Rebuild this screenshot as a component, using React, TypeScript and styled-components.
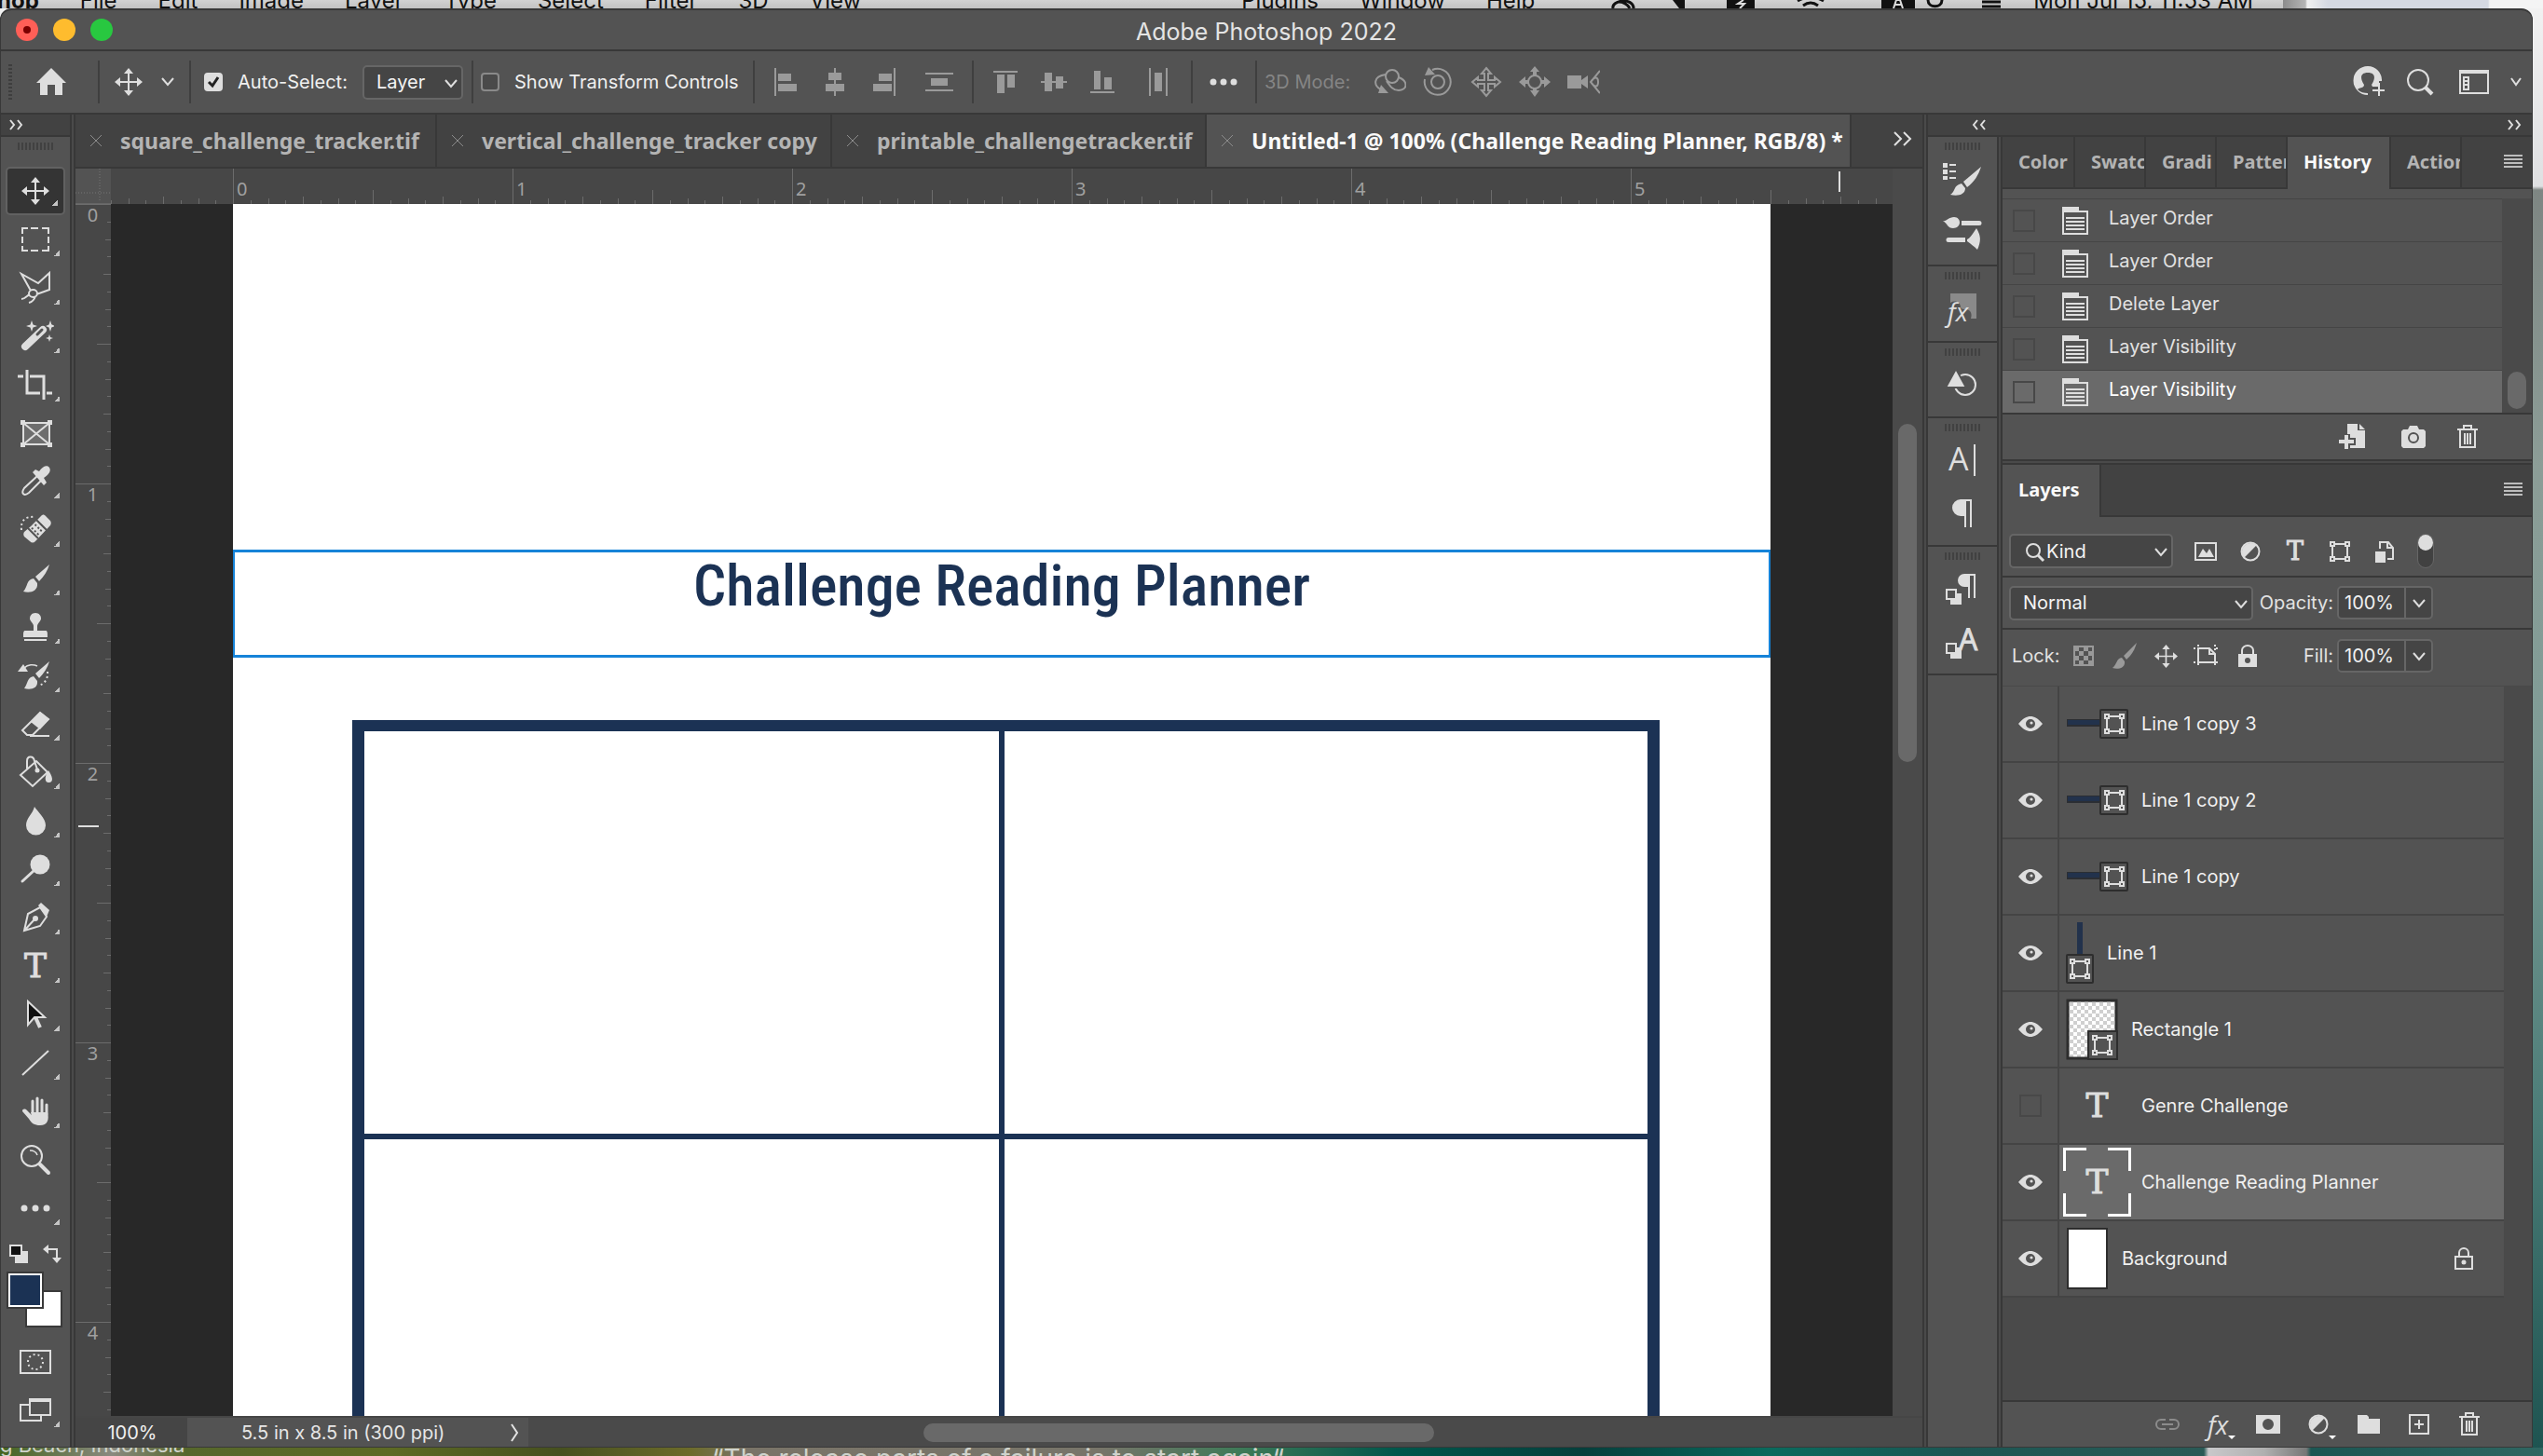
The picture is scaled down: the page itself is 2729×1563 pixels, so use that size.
import React from "react";
import styled, { createGlobalStyle, css } from "styled-components";

const c = {
  panel: "#535353",
  dark: "#424242",
  mid: "#4a4a4a",
  ruler: "#474747",
  line: "#383838",
  icon: "#dedede",
  dim: "#9a9a9a",
  text: "#f0f0f0",
  navy: "#1b3254",
};
const ui = `Inter, "Liberation Sans", sans-serif`;
const tabFont = `"Noto Sans", "Open Sans", sans-serif`;

const Global = createGlobalStyle`
  *, *::before, *::after { box-sizing: border-box; }
  body { margin: 0; font-family: ${ui}; font-size: 20px; color: ${c.text}; }
  button, input, select { font: inherit; color: inherit; margin: 0; }
  button { background: none; border: 0; padding: 0; display: flex; align-items: center; justify-content: center; flex: none; }
  svg { display: block; flex: none; }
`;

/* ---------- Desktop ---------- */
const Desktop = styled.div`
  height: 100vh;
  display: flex;
  flex-direction: column;
  overflow: hidden;
  background: linear-gradient(180deg, #f2f2f2 0, #dfe0e2 200px, #7e8683 204px, #8c9d97 500px, #7f9c96 800px, #4c7d78 1200px, #1d5350 100%);
`;
const MenuBar = styled.div`
  height: 9px;
  flex: none;
  display: flex;
  background: linear-gradient(180deg, #d2d2d2, #c2c2c2);
  color: #111;
  font-size: 24px;
  line-height: 28px;
  overflow: hidden;
  white-space: nowrap;
`;
const MenuText = styled.nav`
  display: flex;
  gap: 44px;
  margin: -13px 408px 0 -3px;
`;
const MenuRight = styled.div`
  display: flex;
  gap: 44px;
  margin-top: -13px;
`;
const MenuIcons = styled.svg`
  margin: 0 33px 0 82px;
`;
const MenuEnd = styled.div`
  margin-left: 32px;
  flex: 1;
  height: 9px;
  background: linear-gradient(90deg, #8c8c8c 0, #b5b5b5 24px, #f0f0f0 26px, #d5d9e3 48px, #d5d9e3 220px, #f4f4f4 222px);
`;
const DesktopFoot = styled.div`
  height: 9px;
  flex: none;
  overflow: hidden;
  white-space: nowrap;
  display: flex;
  gap: 566px;
  color: #cfd3cc;
  font-size: 22px;
  line-height: 26px;
  background: linear-gradient(90deg, #44651f 0, #8a8a80 120px, #56672c 200px, #5d6a24 420px, #46501f 600px, #6c6b2a 740px, #7a7468 800px, #78756a 1180px, #3f7a58 1330px, #00564b 1500px, #063f3c 1700px, #0a6a5d 1900px, #1c5653 2100px, #2a5a56 2365px, #c8c8ca 2370px, #b0b0b0 2430px, #777 2475px, #1c5653 2480px, #2f6661 100%);
`;
const FootText = styled.span<{ $big?: boolean }>`
  margin-top: ${(p) => (p.$big ? "-1px" : "-16px")};
  font-size: ${(p) => (p.$big ? 28 : 22)}px;
`;

/* ---------- Window ---------- */
const Window = styled.div`
  flex: 1;
  min-height: 0;
  margin-right: 11px;
  display: flex;
  flex-direction: column;
  background: ${c.line};
  border: solid ${c.line};
  border-width: 2px 1px 1px;
  border-radius: 12px 12px 0 0;
  overflow: hidden;
`;
const TitleBar = styled.header`
  height: 42px;
  flex: none;
  display: grid;
  grid-template-columns: 1fr auto 1fr;
  align-items: center;
  padding: 0 16px;
  background: ${c.panel};
  color: #e4e4e4;
`;
const Title = styled.h1`
  margin: 4px 0 0;
  font-size: 25px;
  font-weight: 400;
  line-height: 30px;
`;
const Lights = styled.div`
  display: flex;
  gap: 16px;
`;
const Light = styled.button<{ $c: string }>`
  width: 24px;
  height: 24px;
  border-radius: 50%;
  background: ${(p) => p.$c};
`;
const OptionsBar = styled.div`
  height: 66px;
  flex: none;
  margin-top: 2px;
  padding-right: 4px;
  display: flex;
  align-items: center;
  background: ${c.panel};
`;
const Section = styled.div<{ $w?: number }>`
  display: flex;
  align-items: center;
  height: 46px;
  flex: none;
  width: ${(p) => (p.$w ? p.$w + "px" : "auto")};
  border-right: 2px solid #3f3f3f;
`;
const Cell = styled.button<{ $w?: number; $h?: number; $gap?: number }>`
  position: relative;
  width: ${(p) => p.$w ?? 52}px;
  height: ${(p) => p.$h ?? 44}px;
  margin-left: ${(p) => p.$gap ?? 0}px;
`;
const DotGrip = styled.span`
  width: 4px;
  height: 38px;
  margin: 0 16px 0 8px;
  background: repeating-linear-gradient(180deg, #3e3e3e 0 2px, transparent 2px 4px);
`;
const Check = styled.input`
  appearance: none;
  width: 20px;
  height: 20px;
  flex: none;
  border: 2px solid #8a8a8a;
  border-radius: 4px;
  background: #4a4a4a;
  &:checked {
    border-color: ${c.icon};
    background: ${c.icon};
  }
`;
const CheckLabel = styled.label<{ $left: number }>`
  display: flex;
  align-items: center;
  gap: 16px;
  white-space: nowrap;
  margin-left: ${(p) => p.$left}px;
`;
const CheckBox = styled.span`
  position: relative;
  display: flex;
`;
const Tick = styled.svg`
  position: absolute;
  left: 2px;
  top: 2px;
  pointer-events: none;
`;
const SelectBox = styled.span<{ $w: number; $pad?: number; $right?: number }>`
  position: relative;
  width: ${(p) => p.$w}px;
  flex: none;
  margin-right: ${(p) => p.$right ?? 0}px;
  select {
    appearance: none;
    width: 100%;
    height: 37px;
    padding: 0 0 0 ${(p) => p.$pad ?? 13}px;
    background: #454545;
    border: 2px solid #666;
    border-radius: 5px;
    color: #f4f4f4;
  }
`;
const SelectArrow = styled.svg`
  position: absolute;
  right: 6px;
  top: 14px;
  pointer-events: none;
`;
const SelectLens = styled.svg`
  position: absolute;
  left: 17px;
  top: 9px;
  pointer-events: none;
`;
const DimLabel = styled.span`
  margin: 0 16px 0 8px;
  color: #858585;
`;
const Spacer = styled.div`
  flex: 1;
`;

const Body = styled.div`
  flex: 1;
  min-height: 0;
  margin-top: 2px;
  display: flex;
`;
const Strip = styled.div`
  height: 22px;
  flex: none;
  display: flex;
  align-items: center;
  background: ${c.dark};
  margin-bottom: 2px;
`;
const Split = styled.div`
  width: 6px;
  flex: none;
  background: ${c.mid};
  border: solid ${c.line};
  border-width: 0 2px;
`;
const Grip = styled.span`
  width: 38px;
  height: 8px;
  flex: none;
  background: repeating-linear-gradient(90deg, #414141 0 2px, transparent 2px 4px);
`;

/* ---------- Tools ---------- */
const ToolCol = styled.aside`
  width: 74px;
  flex: none;
  display: flex;
  flex-direction: column;
`;
const ToolList = styled.div`
  flex: 1;
  background: ${c.panel};
  display: flex;
  flex-direction: column;
  align-items: center;
  padding-top: 6px;
`;
const Tools = styled.div`
  margin-top: 18px;
`;
const Tool = styled.button<{ $on?: boolean }>`
  position: relative;
  width: 64px;
  height: 52px;
  border-radius: 5px;
  ${(p) => p.$on && css`background: #343434; border: 2px solid #616161;`}
`;
const Corner = styled.i`
  position: absolute;
  right: 6px;
  bottom: 8px;
  width: 6px;
  height: 6px;
  background: linear-gradient(135deg, transparent 50%, #c4c4c4 50%);
`;
const DropMark = styled.i`
  position: absolute;
  right: 8px;
  bottom: 6px;
  border: solid transparent;
  border-width: 4px 4px 0;
  border-top-color: #fff;
`;
const MiniRow = styled.div`
  display: flex;
  width: 58px;
  justify-content: space-between;
  margin-top: 13px;
`;
const Swatches = styled.div`
  position: relative;
  width: 60px;
  height: 60px;
  margin: 9px 2px 11px 0;
`;
const Swatch = styled.button<{ $c: string; $back?: boolean }>`
  position: absolute;
  width: 40px;
  height: 40px;
  background: ${(p) => p.$c};
  border: 2px solid #3a3a3a;
  ${(p) => (p.$back ? "right: 0; bottom: 0;" : "left: 0; top: 0; box-shadow: inset 0 0 0 2px #fff;")}
`;

/* ---------- Document ---------- */
const Doc = styled.main`
  flex: 1;
  min-width: 0;
  display: flex;
  flex-direction: column;
`;
const DocTabs = styled.div`
  height: 56px;
  flex: none;
  display: flex;
  background: ${c.dark};
`;
const DocTab = styled.div<{ $on?: boolean; $w: number }>`
  width: ${(p) => p.$w}px;
  flex: none;
  display: flex;
  align-items: center;
  gap: 20px;
  padding-left: 16px;
  border-right: 2px solid ${c.line};
  background: ${(p) => (p.$on ? c.panel : c.dark)};
  overflow: hidden;
`;
const DocName = styled.button<{ $on?: boolean }>`
  font-family: ${tabFont};
  font-weight: 700;
  font-size: 23px;
  line-height: 28px;
  white-space: nowrap;
  color: ${(p) => (p.$on ? "#fafafa" : "#b4b4b4")};
`;
const Stage = styled.div`
  flex: 1;
  min-height: 0;
  margin-top: 2px;
  display: grid;
  grid-template-columns: 38px minmax(0, 1fr) 32px;
  grid-template-rows: 38px minmax(0, 1fr);
`;
const RulerCorner = styled.div`
  background: ${c.panel};
  border: solid #666;
  border-width: 0 0 1px;
`;
const RulerX = styled.div`
  position: relative;
  overflow: hidden;
  background: ${c.ruler};
  display: flex;
  justify-content: center;
`;
const RulerY = styled.div`
  position: relative;
  overflow: hidden;
  background: ${c.ruler};
`;
const Ticks = styled.svg`
  position: absolute;
  inset: 0;
  width: 100%;
  height: 100%;
`;
const NumsX = styled.div`
  position: relative;
  width: 1650px;
  flex: none;
  display: flex;
  overflow: hidden;
`;
const Num = styled.span<{ $y?: boolean }>`
  flex: none;
  font-family: ${tabFont};
  font-size: 20px;
  color: #a0a0a0;
  ${(p) =>
    p.$y
      ? "display: block; height: 300px; line-height: 24px; text-align: center; padding-right: 1px;"
      : "width: 300px; line-height: 28px; padding: 8px 0 0 4px;"}
`;
const VBar = styled.div`
  background: ${c.mid};
  display: flex;
  justify-content: center;
`;
const VThumb = styled.div`
  width: 20px;
  height: 363px;
  margin-top: 236px;
  border-radius: 10px;
  background: #696969;
`;
const Pasteboard = styled.div`
  background: #282828;
  display: flex;
  justify-content: center;
  overflow: hidden;
`;
const Page = styled.div`
  width: 1650px;
  flex: none;
  background: #fff;
  padding-top: 371px;
`;
const TextFrame = styled.div`
  height: 116px;
  border: 3px solid #1683d8;
  border-width: 3px 2px;
  color: ${c.navy};
  font-family: "Roboto Condensed", "Liberation Sans Narrow", sans-serif;
  font-weight: 500;
  font-size: 62px;
  line-height: 72px;
  text-align: center;
  white-space: nowrap;
`;
const Planner = styled.div`
  width: 1403px;
  margin: 67px 0 0 128px;
  border: solid ${c.navy};
  border-width: 12px 13px;
  display: grid;
  grid-template-columns: 681fr 690fr;
  grid-template-rows: 432px 432px;
  gap: 6px;
  background: ${c.navy};
`;
const PlannerCell = styled.div`
  background: #fff;
`;
const StatusBar = styled.footer`
  height: 33px;
  flex: none;
  display: flex;
  background: ${c.mid};
  border-top: 2px solid #464646;
`;
const ZoomBox = styled.input`
  width: 120px;
  border: 0;
  background: #454545;
  text-align: center;
  padding: 0 0 0 2px;
`;
const DocInfo = styled.button`
  width: 366px;
  background: ${c.panel};
  padding: 0 10px 0 58px;
  justify-content: space-between;
  color: #e6e6e6;
`;
const HTrack = styled.div`
  flex: 1;
  display: grid;
  grid-template-columns: 424fr 547fr 524fr;
  align-items: center;
`;
const HThumb = styled.div`
  grid-column: 2;
  height: 20px;
  border-radius: 10px;
  background: #696969;
`;

/* ---------- Right dock ---------- */
const Dock = styled.section`
  width: 648px;
  flex: none;
  display: flex;
  flex-direction: column;
`;
const DockStrip = styled(Strip)`
  padding: 0 12px 0 48px;
  justify-content: space-between;
`;
const DockBody = styled.div`
  flex: 1;
  min-height: 0;
  display: flex;
`;
const IconCol = styled.div`
  width: 74px;
  flex: none;
  display: flex;
  flex-direction: column;
  gap: 2px;
`;
const IconGroup = styled.div<{ $grow?: boolean }>`
  background: ${c.panel};
  display: flex;
  flex-direction: column;
  align-items: center;
  padding: 6px 0 7px;
  ${(p) => p.$grow && "flex: 1;"}
`;
const Panels = styled.div`
  flex: 1;
  min-width: 0;
  display: flex;
  flex-direction: column;
`;
const Panel = styled.div<{ $grow?: boolean }>`
  display: flex;
  flex-direction: column;
  background: ${c.panel};
  min-height: 0;
  ${(p) => p.$grow && "flex: 1;"}
`;
const PanelGap = styled.div`
  height: 6px;
  flex: none;
  background: ${c.mid};
  border: solid ${c.line};
  border-width: 2px 0;
`;
const PanelTabs = styled.div`
  height: 56px;
  flex: none;
  display: flex;
  background: ${c.dark};
  box-shadow: inset 0 -2px ${c.line};
`;
const PanelTab = styled.button<{ $on?: boolean; $w: number }>`
  width: ${(p) => p.$w}px;
  justify-content: flex-start;
  padding: 0 0 4px 17px;
  overflow: hidden;
  border-right: 2px solid ${c.line};
  background: ${(p) => (p.$on ? c.panel : "transparent")};
  color: ${(p) => (p.$on ? "#fafafa" : "#b4b4b4")};
  font-family: ${tabFont};
  font-weight: 700;
  font-size: 20px;
`;
const PanelMenu = styled.button`
  margin-left: auto;
  padding: 0 10px 4px 0;
`;
const HistoryList = styled.div`
  margin-top: 10px;
  display: flex;
`;
const HistoryRows = styled.div`
  flex: 1;
`;
const HistoryRow = styled.label<{ $on?: boolean }>`
  height: 46px;
  display: flex;
  align-items: center;
  border-top: 1px solid #454545;
  background: ${(p) => (p.$on ? "#6a6a6a" : c.panel)};
  color: ${(p) => (p.$on ? "#fff" : "#e2e2e2")};
`;
const HistoryName = styled.span`
  padding-bottom: 6px;
`;
const HistoryIcon = styled.svg`
  margin: 0 22px 0 29px;
`;
const EmptyCheck = styled.input`
  appearance: none;
  width: 24px;
  height: 24px;
  flex: none;
  margin-left: 11px;
  border: 2px solid #484848;
`;
const SideTrack = styled.div<{ $w?: number }>`
  width: ${(p) => p.$w ?? 32}px;
  flex: none;
  background: ${c.mid};
  display: flex;
  align-items: flex-end;
  justify-content: center;
`;
const SideThumb = styled.div`
  width: 20px;
  height: 40px;
  margin-bottom: 4px;
  border-radius: 10px;
  background: #696969;
`;
const HistoryFoot = styled.div`
  height: 50px;
  display: flex;
  align-items: center;
  justify-content: flex-end;
  padding-right: 40px;
  border-top: 2px solid ${c.line};
`;
const LayerBar = styled.div<{ $h: number; $line?: boolean; $top?: number; $bottom?: number }>`
  height: ${(p) => p.$h}px;
  flex: none;
  display: flex;
  align-items: center;
  padding: ${(p) => p.$top ?? 0}px 0 ${(p) => p.$bottom ?? 0}px 7px;
  ${(p) => p.$line && `border-bottom: 2px solid ${c.line};`}
`;
const Toggle = styled.button`
  width: 18px;
  height: 37px;
  margin-left: 11px;
  border-radius: 9px;
  border: 1px solid #666;
  background: #414141;
  align-items: flex-start;
  &::before {
    content: "";
    width: 17px;
    height: 17px;
    border-radius: 50%;
    background: ${c.icon};
  }
`;
const FieldLabel = styled.label<{ $push?: boolean }>`
  color: #e2e2e2;
  margin-right: 4px;
  ${(p) => (p.$push ? "margin-left: auto;" : "margin-left: 3px;")}
`;
const Combo = styled.span`
  width: 103px;
  height: 36px;
  display: flex;
  flex: none;
  margin: 0 106px 0 0;
  border: 2px solid #666;
  border-radius: 5px;
  background: #454545;
  input {
    width: 72px;
    background: none;
    border: 0;
    border-right: 2px solid #666;
    padding: 0 0 0 6px;
  }
  button { flex: 1; padding-top: 2px; }
`;
const LayerArea = styled.div`
  flex: 1;
  min-height: 0;
  display: flex;
  background: ${c.mid};
  border-top: 1px solid #494949;
`;
const LayerList = styled.ul`
  list-style: none;
  margin: 0;
  padding: 0;
  flex: 1;
`;
const LayerRow = styled.li<{ $on?: boolean }>`
  height: 82px;
  display: grid;
  grid-template-columns: 61px 1fr;
  border-bottom: 2px solid #444;
  background: ${(p) => (p.$on ? "#6a6a6a" : c.panel)};
`;
const EyeCell = styled.button`
  background: ${c.panel};
  border-right: 2px solid #444;
`;
const EyeOff = styled.span`
  width: 24px;
  height: 24px;
  border: 2px solid #484848;
`;
const LayerBody = styled.div`
  display: flex;
  align-items: center;
  padding: 0 33px 0 7px;
`;
const LayerName = styled.span`
  flex: 1;
  margin-left: 14px;
`;
const Bracket = styled.span<{ $on?: boolean }>`
  width: 73px;
  height: 74px;
  margin: 0 -3px;
  display: flex;
  align-items: center;
  justify-content: center;
  --b: ${(p) => (p.$on ? "#fff" : "transparent")};
  background:
    linear-gradient(var(--b) 0 0) 0 0 / 25px 3px, linear-gradient(var(--b) 0 0) 0 0 / 3px 25px,
    linear-gradient(var(--b) 0 0) 100% 0 / 25px 3px, linear-gradient(var(--b) 0 0) 100% 0 / 3px 25px,
    linear-gradient(var(--b) 0 0) 0 100% / 25px 3px, linear-gradient(var(--b) 0 0) 0 100% / 3px 25px,
    linear-gradient(var(--b) 0 0) 100% 100% / 25px 3px, linear-gradient(var(--b) 0 0) 100% 100% / 3px 25px;
  background-repeat: no-repeat;
`;
const SlabT = styled.span<{ $s: number }>`
  font-family: "DejaVu Serif", serif;
  font-size: ${(p) => p.$s}px;
  line-height: 1;
  color: ${c.icon};
  -webkit-text-stroke: 1px ${c.icon};
`;
const LayersFoot = styled.div`
  height: 50px;
  flex: none;
  display: flex;
  align-items: center;
  justify-content: flex-end;
  padding-right: 40px;
  border-top: 2px solid ${c.line};
`;
const Fx = styled.span<{ $s: number }>`
  font-family: "Open Sans", sans-serif;
  font-style: italic;
  font-size: ${(p) => p.$s}px;
  line-height: 1;
  color: ${c.icon};
`;

/* ---------- Drawings ---------- */
type DrawProps = { w: number; h: number; children: React.ReactNode };
const Draw = ({ w, h, children }: DrawProps) => (
  <svg width={w} height={h} viewBox={`0 0 ${w} ${h}`} fill="none" stroke={c.icon} strokeWidth={2} aria-hidden="true">
    {children}
  </svg>
);
const F = { fill: c.icon, stroke: "none" };
const D = { fill: c.dim, stroke: "none" };

const Chevron = ({ w = 14 }: { w?: number }) => (
  <Draw w={w} h={12}><path d={`M1 2l${w / 2 - 1} 7 ${w / 2 - 1}-7`} /></Draw>
);
const Double = ({ left, s = 12 }: { left?: boolean; s?: number }) => (
  <Draw w={s + 4} h={s}>
    {left ? (
      <path d={`M${s / 2} 1l-4 ${s / 2 - 1} 4 ${s / 2 - 1}M${s + 2} 1l-4 ${s / 2 - 1} 4 ${s / 2 - 1}`} />
    ) : (
      <path d={`M2 1l${s / 3} ${s / 2 - 1}-${s / 3} ${s / 2 - 1}M${s / 2 + 4} 1l${s / 3} ${s / 2 - 1}-${s / 3} ${s / 2 - 1}`} />
    )}
  </Draw>
);
const Burger = () => (
  <Draw w={20} h={16}><path stroke="#bdbdbd" d="M0 2h20M0 6h20M0 10h20M0 14h20" /></Draw>
);
const Move = ({ s = 30 }: { s?: number }) => (
  <svg width={s} height={s} viewBox="0 0 30 30" fill="none" stroke={c.icon} strokeWidth={2}>
    <path d="M15 4v22M4 15h22" />
    <path {...F} d="M15 0l5 6H10zM15 30l5-6H10zM0 15l6-5v10zM30 15l-6-5v10z" />
  </svg>
);
const ShapeBox = ({ w = 22, h = 22 }: { w?: number; h?: number }) => (
  <svg width={w} height={h} viewBox="0 0 22 22" fill="none" stroke={c.icon} strokeWidth={2}>
    <path d="M5 3h12M5 19h12M3 5v12M19 5v12" />
    <path d="M1 1h4v4H1zM17 1h4v4h-4zM1 17h4v4H1zM17 17h4v4h-4z" />
  </svg>
);
const Half = () => (
  <Draw w={22} h={22}><circle cx="11" cy="11" r="9.5" /><path {...F} d="M17.7 4.3A9.5 9.5 0 0 0 4.3 17.7z" /></Draw>
);
const Trash = () => (
  <Draw w={22} h={26}><path d="M0 5h22M3 5v19h16V5M7 5V1h8v4M8 9v12M11 9v12M14 9v12" /></Draw>
);
const Eye = () => (
  <Draw w={26} h={20}>
    <path {...F} fillRule="evenodd" d="M0 10C5 4 9 2 13 2s8 2 13 8c-5 6-9 8-13 8S5 16 0 10zM13 5a5 5 0 1 0 0 10 5 5 0 0 0 0-10z" />
    <circle {...F} cx="14" cy="9" r="1.6" />
  </Draw>
);

const tools: { name: string; corner?: boolean; art: React.ReactNode }[] = [
  { name: "Move", corner: true, art: <><path d="M20 9v22M9 20h22" /><path {...F} d="M20 5l5 6H15zM20 35l5-6H15zM5 20l6-5v10zM35 20l-6-5v10z" /></> },
  { name: "Marquee", corner: true, art: <path d="M6 14V8h6M15 8h8M27 8h7v6M34 17v7M34 27v5h-7M23 32h-8M12 32H6v-5M6 24v-7" /> },
  { name: "Lasso", corner: true, art: <path d="M15 23L5 5l18 10L35 4v18l-14 5M5 32c4 0 6-4 9-5M13 36c4-1 6-4 7-7M13 26a4.500 4 0 1 0 9 0 4.500 4 0 0 0-9 0z" /> },
  { name: "Magic Wand", corner: true, art: (<>
    <path strokeWidth={8} strokeLinecap="round" d="M9 31L28 13" /><path stroke={c.panel} strokeWidth={3} strokeLinecap="round" d="M22 18l5-5" />
    <path {...F} d="M16 3l1.500 4.500L22 9l-4.500 1.500L16 15l-1.500-4.500L10 9l4.500-1.500zM36 3l1.300 4.200L41 9l-3.700 1.500L36 15l-1.500-4.500L31 9l3.500-1.500zM35 18l1 3 3 1-3 1-1 3-1-3-3-1 3-1z" /></>) },
  { name: "Crop", corner: true, art: <path strokeWidth={3} d="M1 11h6M11 4v25h14M14 11h15v25M32 29h6" /> },
  { name: "Frame", art: <><path fill="#6d6d6d" d="M7 9h28v23H7zM7 9l28 23M35 9L7 32" /><path {...F} d="M4 6h5v5H4zM33 6h5v5h-5zM4 30h5v5H4zM33 30h5v5h-5z" /></> },
  { name: "Eyedropper", corner: true, art: <><path d="M22 14L8 27c-4 6 0 9 5 5l13-13" /><path {...F} d="M17 10l3-3 4 2c4-6 9-7 11-4s0 7-6 11l3 5-3 3z" /></> },
  { name: "Healing Brush", corner: true, art: (<>
    <path {...F} d="M15 16l11-11c2-2 3-2 5 0l5 5c1 2 1 3 0 5L20 32c-2 2-4 2-6 0l-6-5c-1-2-1-3 0-5z" />
    <path stroke={c.panel} d="M12 18l11 11M21 9l11 11" /><path stroke={c.panel} strokeDasharray="2 3" d="M16 19l8-8M19 22l8-8M22 25l7-8" />
    <path strokeDasharray="2 3" d="M5 20C4 10 9 5 19 6" /></>) },
  { name: "Brush", corner: true, art: <path {...F} d="M35 5L20 18l4 5C29 18 33 12 35 5zM18 20c-8 1-6 9-11 14 7 2 16 0 15-9z" /> },
  { name: "Clone Stamp", corner: true, art: <path {...F} d="M20 5c4 0 6 3 6 6s-4 5-4 8v5h9c2 0 2 2 2 7H7c0-5 0-7 2-7h9v-5c0-3-4-5-4-8s2-6 6-6zM8 33h24v2H8z" /> },
  { name: "History Brush", corner: true, art: <><path {...F} d="M35 5L20 18l4 5C29 18 33 12 35 5zM18 21c-7 1-6 8-10 13 7 2 15 0 14-8zM7 8l5 8H1z" /><path strokeWidth={1.500} d="M8 12c4-4 10-4 14-2" /><path strokeDasharray="2 3" d="M33 16c1 8-4 14-10 15" /></> },
  { name: "Eraser", corner: true, art: <><path d="M6 27L25 8l9 7-17 17H11z" /><path {...F} d="M15 18L25 7l10 8-10 11z" /><path d="M14 33h21" /></> },
  { name: "Paint Bucket", corner: true, art: <><path d="M4 23L21 8l12 12-16 15zM11 16V8c0-6 7-6 8 0l3 9" /><circle {...F} cx="22" cy="18" r="2.500" /><path {...F} d="M34 18c4 6 6 12 1 13s-6-6-1-13z" /></> },
  { name: "Blur", corner: true, art: <path {...F} d="M19 5c3 5 12 12 12 20a10.500 10.500 0 0 1-21 0C10 17 17 13 19 5z" /> },
  { name: "Dodge", corner: true, art: <><circle {...F} cx="25" cy="15" r="10.500" /><path strokeWidth={3} strokeLinecap="round" d="M6 33l13-12" /></> },
  { name: "Pen", corner: true, art: <><path d="M8 34l4-18 13-7 7 10-7 10zM8 34l11-12" /><circle {...F} cx="20" cy="21" r="3" /><path {...F} d="M23 7l3-3 9 8-3 7z" /></> },
  { name: "Type", corner: true, art: null },
  { name: "Path Selection", corner: true, art: <><path fill="#111" d="M12 6v25l7-8h11z" /><path strokeWidth={4} d="M20 23l5 11" /></> },
  { name: "Line", corner: true, art: <path d="M6 33L34 7" /> },
  { name: "Hand", corner: true, art: <><path strokeWidth={3} strokeLinecap="round" d="M17 22V9M22 21V6M27 22V8M32 23V13" /><path {...F} d="M15 21h18c2 8 0 14-8 14-6 0-9-2-12-7l-7-8c0-3 3-3 5-1l5 5z" /></> },
  { name: "Zoom", art: <><circle cx="16" cy="16" r="11" /><path d="M14 10c5 0 7 2 8 5" strokeWidth={1.500} /><path strokeWidth={4} strokeLinecap="round" d="M25 25l9 9" /></> },
  { name: "More tools", corner: true, art: <><circle {...F} cx="8" cy="20" r="3.500" /><circle {...F} cx="20" cy="20" r="3.500" /><circle {...F} cx="32" cy="20" r="3.500" /></> },
];

const aligns: [string, React.ReactNode][][] = [
  [
    ["Align left", <path d="M2 1h2v30H2zM6 7h14v8H6zM6 18h20v8H6z" />],
    ["Align centers", <path d="M14 1h2v30h-2zM8 6h14v8H8zM5 18h20v8H5z" />],
    ["Align right", <path d="M26 1h2v30h-2zM10 7h14v8H10zM4 18h20v8H4z" />],
    ["Distribute", <path d="M0 6h30v2H0zM6 12h18v8H6zM0 24h30v2H0z" />],
  ],
  [
    ["Align top", <path d="M2 4h26v2H2zM6 8h8v20H6zM17 8h8v14h-8z" />],
    ["Align middles", <path d="M1 15h28v2H1zM5 6h8v20H5zM17 10h8v13h-8z" />],
    ["Align bottom", <path d="M2 26h26v2H2zM6 4h7v20H6zM17 11h8v13h-8z" />],
    ["Distribute across", <path d="M5 1h2v30H5zM11 6h8v20h-8zM23 1h2v30h-2z" />],
  ],
];

const modes: React.ReactNode[] = [
  <><circle cx="20" cy="11" r="7" /><path d="M13 9C-1 11 0 21 8 25M27 12c10 4 10 13 0 14-6 0-9-4-13-10" /><path {...D} d="M8 20l8 9H5z" /></>,
  <><circle cx="17" cy="17" r="7" /><path d="M3 14a14 14 0 1 0 8-10" /><path {...D} d="M3 10l4-9 7 8z" /></>,
  <path d="M17 2l5 6h-3v7h7v-3l6 5-6 5v-3h-7v7h3l-5 6-5-6h3v-7H8v3l-6-5 6-5v3h7V8h-3z" />,
  <><circle cx="17" cy="17" r="7" /><path {...D} d="M17 0l5 6h-3v4h-4V6h-3zM12 26l5 7 5-7h-3v-3h-4v3zM0 17l7-6v4h4v4H7v4zM34 17l-7-6v4h-4v4h4v4z" /></>,
  <><path {...D} d="M0 10h15v14H0zM15 15l7-5v14l-7-5z" /><path d="M35 5L25 17l10 12M25 17c4-6 8-6 8 0s-4 6-8 0" /></>,
];

const RulerTicks = ({ vertical }: { vertical?: boolean }) => {
  const id = vertical ? "ty" : "tx";
  const marks = Array.from({ length: 16 }, (_, i) => {
    const len = i === 0 ? 38 : i === 8 ? 15 : i % 4 === 0 ? 8 : i % 2 === 0 ? 6 : 4;
    const p = Math.round(i * 18.75);
    return vertical ? `M${38 - len} ${p + 0.5}h${len}` : `M${p + 0.5} ${38 - len}v${len}`;
  }).join("");
  return (
    <Ticks aria-hidden="true">
      <defs>
        <pattern id={id} patternUnits="userSpaceOnUse" x={vertical ? 0 : 131} y="0" width={vertical ? 38 : 300} height={vertical ? 300 : 38}>
          <path d={marks} stroke="#6c6c6c" strokeWidth={1} />
        </pattern>
      </defs>
      <rect width="100%" height="100%" fill={`url(#${id})`} />
      {vertical ? <path d="M3 668h22" stroke={c.icon} strokeWidth={2} /> : <path d="M1855 3v22" stroke={c.icon} strokeWidth={2} />}
    </Ticks>
  );
};

const LineThumb = () => (
  <Draw w={67} h={32}>
    <path {...F} fill="#2b2e33" d="M1 11h36v8H1z" /><path {...F} fill="#22324c" d="M2 12h35v5H2z" />
    <rect x="37" y="1" width="29" height="30" rx="1" fill={c.panel} stroke="#2d2d2d" />
    <g transform="translate(41 5)"><ShapeBox /></g>
  </Draw>
);
const LineVThumb = () => (
  <Draw w={30} h={66}>
    <path {...F} fill="#22324c" d="M12 0h6v36h-6z" />
    <rect x="1" y="35" width="28" height="30" rx="1" fill={c.panel} stroke="#2d2d2d" />
    <g transform="translate(4 39)"><ShapeBox /></g>
  </Draw>
);
const RectThumb = () => (
  <Draw w={56} h={66}>
    <defs><pattern id="chk" width="8" height="8" patternUnits="userSpaceOnUse"><path d="M0 0h8v8H0z" fill="#fff" stroke="none" /><path d="M0 0h4v4H0zM4 4h4v4H4z" fill="#cfcfcf" stroke="none" /></pattern></defs>
    <rect x="2" y="2" width="52" height="62" fill="url(#chk)" stroke="#2d2d2d" strokeWidth={3} />
    <rect x="24" y="35" width="31" height="30" fill={c.panel} stroke="#2d2d2d" />
    <g transform="translate(28 39)"><ShapeBox /></g>
  </Draw>
);
const PageThumb = () => (
  <Draw w={46} h={66}><rect x="2" y="1" width="42" height="64" fill="#fff" stroke="#2d2d2d" strokeWidth={2} /></Draw>
);

const layers: { name: string; thumb: React.ReactNode; hidden?: boolean; on?: boolean; lock?: boolean }[] = [
  { name: "Line 1 copy 3", thumb: <LineThumb /> },
  { name: "Line 1 copy 2", thumb: <LineThumb /> },
  { name: "Line 1 copy", thumb: <LineThumb /> },
  { name: "Line 1", thumb: <LineVThumb /> },
  { name: "Rectangle 1", thumb: <RectThumb /> },
  { name: "Genre Challenge", thumb: <Bracket><SlabT $s={36}>T</SlabT></Bracket>, hidden: true },
  { name: "Challenge Reading Planner", thumb: <Bracket $on><SlabT $s={36}>T</SlabT></Bracket>, on: true },
  { name: "Background", thumb: <PageThumb />, lock: true },
];

const docs: [string, number][] = [
  ["square_challenge_tracker.tif", 388],
  ["vertical_challenge_tracker copy", 424],
  ["printable_challengetracker.tif", 402],
  ["Untitled-1 @ 100% (Challenge Reading Planner, RGB/8) *", 692],
];

const DocGlyph = () => (
  <HistoryIcon width="28" height="30" viewBox="0 0 28 30" fill="none" stroke={c.icon} strokeWidth={2}>
    <path d="M1 5h26v24H1z" /><path {...F} d="M0 0h18v5H0z" /><path d="M4 12h20M4 16h20M4 20h20M4 24h20" />
  </HistoryIcon>
);
const glyphFont = `"Open Sans", sans-serif`;
const Clip = () => (
  <><path {...F} d="M5 21h12v12H5z" /><path fill={c.panel} d="M1 17h10v10H1z" /></>
);

export default function App() {
  return (
    <>
      <Global />
      <Desktop>
        <MenuBar>
          <MenuText aria-label="Menu bar">
            <b>hop</b><span>File</span><span>Edit</span><span>Image</span><span>Layer</span><span>Type</span><span>Select</span><span>Filter</span><span>3D</span><span>View</span>
          </MenuText>
          <MenuRight><span>Plugins</span><span>Window</span><span>Help</span></MenuRight>
          <MenuIcons width="420" height="9" fill="none" stroke="#111" strokeWidth={3}>
            <path d="M2 9C0 0 24-3 24 9M8 2q8 0 12 7M200 1q14-8 28 0M206 6q8-6 16 0M340 0c0 9 15 9 15 0M398 2h20M398 7h20" />
            <path fill="#111" stroke="none" d="M66 0h13v9H73zM124 0h30v9h-30zM290 0h36v9h-36z" />
            <path stroke="#ddd" strokeWidth={2} d="M142 0l-6 4h7l-5 5M303 9l3-9h4l3 9M304 5h8" />
          </MenuIcons>
          <MenuRight><span>Mon Jul 15, 11:53 AM</span></MenuRight>
          <MenuEnd />
        </MenuBar>

        <Window>
          <TitleBar>
            <Lights>
              <Light $c="#ff5f57" aria-label="Close"><Draw w={8} h={8}><circle cx="4" cy="4" r="4" fill="#7a0000" stroke="none" /></Draw></Light>
              <Light $c="#febc2e" aria-label="Minimize" />
              <Light $c="#28c840" aria-label="Zoom window" />
            </Lights>
            <Title>Adobe Photoshop 2022</Title>
          </TitleBar>

          <OptionsBar>
            <Section $w={106}>
              <DotGrip />
              <Cell $w={52} aria-label="Home"><Draw w={34} h={30}><path {...F} d="M17 0l16 16h-4v13h-8V18h-8v11H5V16H1z" /></Draw></Cell>
            </Section>
            <Section $w={98}>
              <Cell $w={62} aria-label="Move tool"><Move /></Cell>
              <Cell $w={22} aria-label="Tool presets"><Chevron /></Cell>
            </Section>
            <Section $w={303}>
              <CheckLabel $left={14}>
                <CheckBox>
                  <Check type="checkbox" defaultChecked />
                  <Tick width="16" height="16" viewBox="0 0 16 16" fill="none" stroke="#222" strokeWidth={3}><path d="M3 8l4 4 6-9" /></Tick>
                </CheckBox>
                Auto-Select:
              </CheckLabel>
              <Spacer />
              <SelectBox $w={108} $right={9}>
                <select aria-label="Auto-select target"><option>Layer</option></select>
                <SelectArrow width="14" height="12" fill="none" stroke={c.icon} strokeWidth={2}><path d="M1 2l6 7 6-7" /></SelectArrow>
              </SelectBox>
            </Section>
            <Section $w={302}>
              <CheckLabel $left={8}><Check type="checkbox" />Show Transform Controls</CheckLabel>
            </Section>
            {aligns.map((g, i) => (
              <Section key={i} $w={235}>
                {g.map(([name, art], j) => (
                  <Cell key={name} $gap={j === 0 || j === 3 ? 8 : 0} aria-label={name}>
                    <svg width="30" height="32" viewBox="0 0 30 32" fill={c.dim}>{art}</svg>
                  </Cell>
                ))}
              </Section>
            ))}
            <Section $w={69}>
              <Cell $w={66} aria-label="More options"><Draw w={30} h={8}><circle {...F} cx="4" cy="4" r="3.500" /><circle {...F} cx="15" cy="4" r="3.500" /><circle {...F} cx="26" cy="4" r="3.500" /></Draw></Cell>
            </Section>
            <DimLabel>3D Mode:</DimLabel>
            {modes.map((m, i) => (
              <Cell key={i} aria-label={"3D mode " + (i + 1)}>
                <svg width="35" height="34" viewBox="0 0 35 34" fill="none" stroke={c.dim} strokeWidth={2}>{m}</svg>
              </Cell>
            ))}
            <Spacer />
            <Cell $w={58} aria-label="Invite"><Draw w={34} h={34}>
              <path {...F} fillRule="evenodd" d="M16 0a15 15 0 0 1 15 16h-3v6h-7l-1-2c4-6 5-13-4-13s-8 7-4 13c0 4-6 3-7 5 3 3 7 4 11 4v2A15 15 0 0 1 16 0z" /><path d="M28 18v14M21 26h13" />
            </Draw></Cell>
            <Cell $w={52} aria-label="Search"><Draw w={30} h={30}><circle cx="13" cy="13" r="11" /><path strokeWidth={4} d="M21 21l7 7" /></Draw></Cell>
            <Cell $w={64} aria-label="Workspace"><Draw w={32} h={28}><path d="M1 2h30v24H1z" /><path {...F} d="M0 1h32v4H0z" /><path d="M5 9h5v13H5zM5 13h5M5 17h5" /></Draw></Cell>
            <Cell $w={26} aria-label="Workspace menu"><Chevron w={12} /></Cell>
          </OptionsBar>

          <Body>
            <ToolCol>
              <Strip><Cell $w={32} $h={22} aria-label="Expand tools"><Double /></Cell></Strip>
              <ToolList>
                <Grip />
                <Tools>
                  {tools.map((t, i) => (
                    <Tool key={t.name} $on={i === 0} aria-label={t.name}>
                      {t.art ? <Draw w={40} h={40}>{t.art}</Draw> : <SlabT $s={36}>T</SlabT>}
                      {t.corner && <Corner />}
                    </Tool>
                  ))}
                </Tools>
                <MiniRow>
                  <Cell $w={22} $h={20} aria-label="Default colors"><Draw w={20} h={20}><path {...F} d="M6 7h14v13H6z" /><path fill="#111" d="M1 1h12v11H1z" /></Draw></Cell>
                  <Cell $w={22} $h={20} aria-label="Swap colors"><Draw w={20} h={20}><path d="M5 5h10v10" /><path {...F} d="M0 5l6-5v10zM15 20l5-6H10z" /></Draw></Cell>
                </MiniRow>
                <Swatches>
                  <Swatch $c="#ffffff" $back aria-label="Background color" />
                  <Swatch $c={c.navy} aria-label="Foreground color" />
                </Swatches>
                <Tool aria-label="Quick mask"><Draw w={34} h={26}><path d="M1 1h32v24H1z" /><circle cx="17" cy="13" r="8" strokeDasharray="2 3" /></Draw></Tool>
                <Tool aria-label="Screen mode"><Draw w={34} h={28}><path d="M11 8H1v17h22v-6M11 2h22v17H11z" /><path {...F} d="M10 1h24v4H10z" /></Draw><Corner /></Tool>
              </ToolList>
            </ToolCol>
            <Split />

            <Doc>
              <DocTabs>
                {docs.map(([name, w], i) => (
                  <DocTab key={name} $w={w} $on={i === 3}>
                    <Cell $w={12} aria-label={"Close " + name}><svg width="12" height="12" stroke="#8c8c8c"><path d="M0 0l12 12M12 0L0 12" /></svg></Cell>
                    <DocName $on={i === 3}>{name}</DocName>
                  </DocTab>
                ))}
                <Spacer />
                <Cell $w={42} $h={52} aria-label="More documents"><svg width="22" height="18" fill="none" stroke="#e2e2e2" strokeWidth={2}><path d="M2 2l7 7-7 7M12 2l7 7-7 7" /></svg></Cell>
              </DocTabs>
              <Stage>
                <RulerCorner><svg width="38" height="36" stroke="#777" strokeDasharray="1 2"><path d="M26 0v36M0 26h38" /></svg></RulerCorner>
                <RulerX><RulerTicks /><NumsX>{[0, 1, 2, 3, 4, 5].map((n) => <Num key={n}>{n}</Num>)}</NumsX></RulerX>
                <VBar />
                <RulerY><RulerTicks vertical />{[0, 1, 2, 3, 4].map((n) => <Num $y key={n}>{n}</Num>)}</RulerY>
                <Pasteboard>
                  <Page>
                    <TextFrame>Challenge Reading Planner</TextFrame>
                    <Planner><PlannerCell /><PlannerCell /><PlannerCell /><PlannerCell /></Planner>
                  </Page>
                </Pasteboard>
                <VBar><VThumb /></VBar>
              </Stage>
              <StatusBar>
                <ZoomBox aria-label="Zoom level" defaultValue="100%" />
                <DocInfo>5.5 in x 8.5 in (300 ppi)<svg width="10" height="20" fill="none" stroke="#e2e2e2" strokeWidth={2}><path d="M2 1l6 9-6 9" /></svg></DocInfo>
                <HTrack><HThumb /></HTrack>
              </StatusBar>
            </Doc>
            <Split />

            <Dock>
              <DockStrip>
                <Cell $w={14} $h={22} aria-label="Expand panels"><Double left /></Cell>
                <Cell $w={14} $h={22} aria-label="Collapse panels"><Double /></Cell>
              </DockStrip>
              <DockBody>
                <IconCol>
                  <IconGroup>
                    <Grip />
                    <Cell $h={62} aria-label="Brush settings"><Draw w={42} h={36}>
                      <path {...F} d="M0 1h5v5H0zM0 8h5v5H0zM0 15h5v4H0zM41 5L22 21l4 6c8-6 12-13 15-22zM20 23c-9 2-6 8-12 12 8 2 16 0 16-7z" /><path d="M7 3h7M7 10h7M7 17h7" />
                    </Draw></Cell>
                    <Cell $h={54} aria-label="Brushes"><Draw w={42} h={36}>
                      <path {...F} d="M0 5c4 1 6-4 12-4 4 0 6 3 6 6s-3 6-7 6C5 13 5 8 0 5zM20 5h19a2 2 0 0 1 0 5H20zM6 23h18v5H6a2 2 0 0 1 0-5zM26 25c4-2 6-6 10-12 5 8 5 14 1 23-4-4-7-6-11-9z" />
                    </Draw></Cell>
                  </IconGroup>
                  <IconGroup>
                    <Grip />
                    <Cell $h={59} aria-label="Styles"><svg width="40" height="44" viewBox="0 0 40 44">
                      <path fill="#8a8a8a" d="M7 7h28v27h-6c2-6-1-10-6-10-2 0-4 0-5-2 0-6-6-8-11-5z" />
                      <text x="4" y="37" fill={c.icon} fontFamily={glyphFont} fontStyle="italic" fontSize="28">fx</text>
                    </svg></Cell>
                  </IconGroup>
                  <IconGroup>
                    <Grip />
                    <Cell $h={58} aria-label="Shapes"><Draw w={36} h={32}><circle cx="21" cy="18" r="11" /><path {...F} d="M11 1l11 20H0z" stroke={c.panel} /></Draw></Cell>
                  </IconGroup>
                  <IconGroup>
                    <Grip />
                    <Cell $h={61} aria-label="Character"><Draw w={34} h={34}>
                      <text x="2" y="28" {...F} fontFamily={glyphFont} fontSize="34">A</text><path d="M30 0v34" /></Draw></Cell>
                    <Cell $h={54} aria-label="Paragraph"><Draw w={26} h={32}><path {...F} d="M11 1h12v2h-8v16h-4a9 9 0 0 1 0-18z" /><path d="M16 2v29M22 2v29" /></Draw></Cell>
                  </IconGroup>
                  <IconGroup>
                    <Grip />
                    <Cell $h={64} aria-label="Paragraph styles"><Draw w={36} h={34}><path {...F} d="M20 0h12v2h-6v12h-6a7 7 0 0 1 0-14z" /><path d="M25 1v25M31 1v25" /><Clip /></Draw></Cell>
                    <Cell $h={51} aria-label="Character styles"><Draw w={36} h={34}>
                      <text x="14" y="24" {...F} stroke={c.icon} strokeWidth={1} fontFamily={glyphFont} fontSize="32">A</text><Clip /></Draw></Cell>
                  </IconGroup>
                  <IconGroup $grow />
                </IconCol>
                <Split />
                <Panels>
                  <Panel>
                    <PanelTabs>
                      <PanelTab $w={78}>Color</PanelTab>
                      <PanelTab $w={76}>Swatc</PanelTab>
                      <PanelTab $w={76}>Gradi</PanelTab>
                      <PanelTab $w={76}>Patter</PanelTab>
                      <PanelTab $w={111} $on>History</PanelTab>
                      <PanelTab $w={76}>Action</PanelTab>
                      <PanelMenu aria-label="History panel menu"><Burger /></PanelMenu>
                    </PanelTabs>
                    <HistoryList>
                      <HistoryRows>
                        {["Layer Order", "Layer Order", "Delete Layer", "Layer Visibility", "Layer Visibility"].map((h, i) => (
                          <HistoryRow key={i} $on={i === 4}><EmptyCheck type="checkbox" /><DocGlyph /><HistoryName>{h}</HistoryName></HistoryRow>
                        ))}
                      </HistoryRows>
                      <SideTrack><SideThumb /></SideTrack>
                    </HistoryList>
                    <HistoryFoot>
                      <Cell $w={74} aria-label="New document from state"><Draw w={28} h={30}>
                        <path {...F} d="M9 1h11v7h8v19H9z" /><path {...F} d="M22 1l6 6h-6z" />
                        <path stroke={c.panel} strokeWidth={8} d="M8 12v18M0 20h18" /><path strokeWidth={4} d="M8 13v15M0 20h16" /></Draw></Cell>
                      <Cell $w={58} aria-label="New snapshot"><Draw w={26} h={24}><path {...F} fillRule="evenodd" d="M2 4h5l2-4h8l2 4h5l2 2v16l-2 2H2l-2-2V6zM13 7a6 6 0 1 0 0 12 6 6 0 0 0 0-12z" /><circle {...F} cx="13" cy="13" r="4" /></Draw></Cell>
                      <Cell $w={58} aria-label="Delete state"><Trash /></Cell>
                    </HistoryFoot>
                  </Panel>
                  <PanelGap />
                  <Panel $grow>
                    <PanelTabs>
                      <PanelTab $w={106} $on>Layers</PanelTab>
                      <PanelMenu aria-label="Layers panel menu"><Burger /></PanelMenu>
                    </PanelTabs>
                    <LayerBar $h={65} $line $top={10}>
                      <SelectBox $w={176} $pad={38}>
                        <SelectLens width="22" height="22" fill="none" stroke={c.icon} strokeWidth={2}><circle cx="9" cy="9" r="7" /><path strokeWidth={3} d="M14 14l6 6" /></SelectLens>
                        <select aria-label="Filter type"><option>Kind</option></select>
                        <SelectArrow width="14" height="12" fill="none" stroke={c.icon} strokeWidth={2}><path d="M1 2l6 7 6-7" /></SelectArrow>
                      </SelectBox>
                      <Cell $w={48} $gap={11} aria-label="Filter pixel layers"><Draw w={24} h={20}><path d="M1 1h22v18H1z" /><path {...F} d="M4 16l5-9 4 5 3-5 5 9z" /></Draw></Cell>
                      <Cell $w={48} aria-label="Filter adjustment layers"><Half /></Cell>
                      <Cell $w={48} aria-label="Filter type layers"><SlabT $s={27}>T</SlabT></Cell>
                      <Cell $w={48} aria-label="Filter shape layers"><ShapeBox /></Cell>
                      <Cell $w={48} aria-label="Filter smart objects"><Draw w={20} h={24}><path {...F} d="M0 12h11v12H0z" /><path d="M5 9V2h9l5 6v12h-6M13 2v6h6" /></Draw></Cell>
                      <Toggle aria-label="Toggle layer filtering" />
                    </LayerBar>
                    <LayerBar $h={56} $line>
                      <SelectBox $w={262}>
                        <select aria-label="Blend mode"><option>Normal</option></select>
                        <SelectArrow width="14" height="12" fill="none" stroke={c.icon} strokeWidth={2}><path d="M1 2l6 7 6-7" /></SelectArrow>
                      </SelectBox>
                      <FieldLabel htmlFor="opacity" $push>Opacity:</FieldLabel>
                      <Combo><input id="opacity" defaultValue="100%" /><button aria-label="Opacity slider"><Chevron /></button></Combo>
                    </LayerBar>
                    <LayerBar $h={60} $bottom={4}>
                      <FieldLabel as="span">Lock:</FieldLabel>
                      <Cell $w={44} aria-label="Lock transparency"><Draw w={22} h={22}><path stroke="#999" d="M1 1h20v20H1z" /><path fill="#999" stroke="none" d="M1 1h5v5H1zM11 1h5v5h-5zM6 6h5v5H6zM16 6h5v5h-5zM1 11h5v5H1zM11 11h5v5h-5zM6 16h5v5H6zM16 16h5v5h-5z" /></Draw></Cell>
                      <Cell $w={44} aria-label="Lock pixels"><Draw w={26} h={28}><path {...D} d="M26 0L12 14l3 4C21 13 24 7 26 0zM10 16c-6 1-5 7-10 11 6 2 14 0 13-7z" /></Draw></Cell>
                      <Cell $w={44} aria-label="Lock position"><Move s={25} /></Cell>
                      <Cell $w={44} aria-label="Lock artboard"><Draw w={28} h={24}><path d="M5 4h12l6 6v9H5zM17 4v6h6" /><path strokeDasharray="2 2" d="M0 4h4M5 0v3M23 0v8M0 19h4M24 19h4M5 20v4M23 20v4M24 4h4" /></Draw></Cell>
                      <Cell $w={44} aria-label="Lock all"><Draw w={20} h={24}><path {...F} fillRule="evenodd" d="M0 10h20v14H0zM10 14a3 3 0 1 0 0 6 3 3 0 0 0 0-6z" /><path d="M4 10V6a6 5 0 0 1 12 0v4" /></Draw></Cell>
                      <FieldLabel htmlFor="fill" $push>Fill:</FieldLabel>
                      <Combo><input id="fill" defaultValue="100%" /><button aria-label="Fill slider"><Chevron /></button></Combo>
                    </LayerBar>
                    <LayerArea>
                      <LayerList>
                        {layers.map((l) => (
                          <LayerRow key={l.name} $on={l.on}>
                            <EyeCell aria-label={"Visibility of " + l.name}>{l.hidden ? <EyeOff /> : <Eye />}</EyeCell>
                            <LayerBody>
                              {l.thumb}
                              <LayerName>{l.name}</LayerName>
                              {l.lock && <Draw w={20} h={24}><path d="M1 10h18v13H1zM5 10V6a5 5 0 0 1 10 0v4" /><circle {...F} cx="10" cy="16" r="2.500" /></Draw>}
                            </LayerBody>
                          </LayerRow>
                        ))}
                      </LayerList>
                      <SideTrack $w={30} />
                    </LayerArea>
                    <LayersFoot>
                      <Cell $w={54} aria-label="Link layers"><svg width="28" height="16" fill="none" stroke="#8c8c8c" strokeWidth={2}><path d="M12 3H7a5 5 0 0 0 0 10h5M16 3h5a5 5 0 0 1 0 10h-5M8 8h12" /></svg></Cell>
                      <Cell $w={54} aria-label="Layer style"><Fx $s={28}>fx</Fx><DropMark /></Cell>
                      <Cell $w={54} aria-label="Add mask"><Draw w={26} h={20}><path {...F} fillRule="evenodd" d="M0 0h26v20H0zM13 4a6 6 0 1 0 0 12 6 6 0 0 0 0-12z" /></Draw></Cell>
                      <Cell $w={54} aria-label="New adjustment layer"><Half /><DropMark /></Cell>
                      <Cell $w={54} aria-label="New group"><Draw w={24} h={20}><path {...F} d="M0 0h10l2 2v2h12v16H0z" /></Draw></Cell>
                      <Cell $w={54} aria-label="New layer"><Draw w={22} h={22}><path d="M1 1h20v20H1zM11 6v10M6 11h10" /></Draw></Cell>
                      <Cell $w={54} aria-label="Delete layer"><Trash /></Cell>
                    </LayersFoot>
                  </Panel>
                </Panels>
              </DockBody>
            </Dock>
          </Body>
        </Window>
        <DesktopFoot>
          <FootText>g Beach, Indonesia</FootText>
          <FootText $big>“The release parts of a failure is to start again“</FootText>
        </DesktopFoot>
      </Desktop>
    </>
  );
}
